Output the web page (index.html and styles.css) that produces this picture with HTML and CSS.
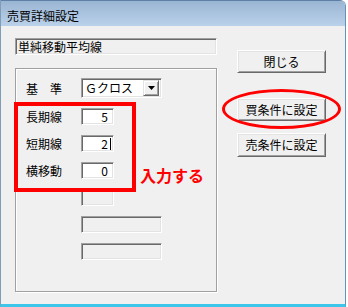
FILE: index.html
```html
<!DOCTYPE html>
<html lang="ja">
<head>
<meta charset="utf-8">
<link rel="stylesheet" href="styles.css">
</head>
<body>
<div class="window">
  <div class="titlebar">売買詳細設定</div>
  <div class="client">
    <div class="leftcol">
      <div class="field readonly wide-full">単純移動平均線</div>
      <div class="group">
        <div class="grid">
          <div class="label">基　準</div>
          <div class="combo">
            <span class="combo-text">Ｇクロス</span>
            <span class="combo-btn"><svg width="7" height="4" viewBox="0 0 7 4"><path d="M0 0h7L3.5 4z" fill="#000"/></svg></span>
          </div>
          <div class="label">長期線</div>
          <div class="field num">5</div>
          <div class="label">短期線</div>
          <div class="field num">2<span class="caret"></span></div>
          <div class="label">横移動</div>
          <div class="field num">0</div>
          <div class="label"></div>
          <div class="field readonly"></div>
          <div class="label"></div>
          <div class="field readonly wide"></div>
          <div class="label"></div>
          <div class="field readonly wide"></div>
        </div>
      </div>
    </div>
    <div class="rightcol">
      <button class="btn">閉じる</button>
      <button class="btn btn-buy">買条件に設定</button>
      <button class="btn">売条件に設定</button>
    </div>
  </div>
  <div class="mark-rect"></div>
  <div class="mark-ellipse"></div>
  <div class="mark-text">入力する</div>
</div>
</body>
</html>
```
FILE: styles.css
```css
html, body {
  margin: 0;
  padding: 0;
  background: #ffffff;
}
body {
  font-family: "Noto Sans CJK JP", "Liberation Sans", sans-serif;
  font-size: 12px;
  color: #000;
}
.window {
  position: relative;
  width: 346px;
  height: 307px;
  box-sizing: border-box;
  background: #f0f0f0;
  border-left: 1px solid #7f9db9;
  border-right: 1px solid #6a8fb8;
  border-bottom: 3px solid #3cc6ea;
  border-top-right-radius: 6px;
  overflow: hidden;
}
.titlebar {
  height: 26px;
  box-sizing: border-box;
  padding: 5px 0 0 6px;
  line-height: 20px;
  font-size: 12px;
  background: linear-gradient(#9ab5d3, #bad1ea);
  border-top: 1px solid #5f80a6;
  color: #000;
}
.client {
  display: flex;
  padding: 12px 0 0 14px;
}
.leftcol {
  width: 202px;
  display: flex;
  flex-direction: column;
  gap: 13px;
}
.rightcol {
  margin-left: 20px;
  padding-top: 12px;
  display: flex;
  flex-direction: column;
  width: 89px;
}
.field {
  box-sizing: border-box;
  height: 17px;
  width: 33px;
  background: #fff;
  border: 1px solid;
  border-color: #a0a0a0 #ffffff #ffffff #a0a0a0;
  box-shadow: inset 1px 1px 0 #696969, inset -1px -1px 0 #e3e3e3;
  line-height: 15px;
  padding: 0 3px 0 2px;
  white-space: nowrap;
  overflow: hidden;
}
.field.readonly {
  background: #f0f0f0;
}
.field.wide-full {
  width: 202px;
}
.field.wide {
  width: 81px;
}
.field.num {
  text-align: right;
  padding-right: 5px;
  position: relative;
}
.caret {
  position: absolute;
  right: 2px;
  top: 2px;
  width: 1px;
  height: 12px;
  background: #000;
}
.field.num:has(.caret) {
  padding-right: 5px;
}
.group {
  box-sizing: border-box;
  height: 224px;
  border: 1px solid #a0a0a0;
  box-shadow: 1px 1px 0 #fff, inset 1px 1px 0 #fff;
  padding: 9px 0 0 10px;
}
.grid {
  display: grid;
  grid-template-columns: 55px auto;
  grid-template-rows: 20px repeat(6, 17px);
  row-gap: 10px;
  align-items: center;
  justify-items: start;
}
.grid .combo {
  margin-bottom: 1px;
}
.label {
  line-height: 17px;
}
.combo {
  box-sizing: border-box;
  width: 81px;
  height: 20px;
  background: #fff;
  border: 1px solid;
  border-color: #a0a0a0 #ffffff #ffffff #a0a0a0;
  box-shadow: inset 1px 1px 0 #696969, inset -1px -1px 0 #e3e3e3;
  display: flex;
  align-items: center;
  padding: 2px 2px 2px 3px;
}
.combo-text {
  flex: 1;
  line-height: 16px;
}
.combo-btn {
  box-sizing: border-box;
  width: 16px;
  height: 16px;
  background: #f0f0f0;
  border: 1px solid;
  border-color: #e3e3e3 #696969 #696969 #e3e3e3;
  box-shadow: inset 1px 1px 0 #fff, inset -1px -1px 0 #a0a0a0;
  display: flex;
  align-items: center;
  justify-content: center;
}
.btn {
  box-sizing: border-box;
  width: 89px;
  height: 23px;
  margin: 0;
  padding: 0;
  font-family: "Noto Sans CJK JP", "Liberation Sans", sans-serif;
  font-size: 12px;
  color: #000;
  background: #f0f0f0;
  border: 1px solid;
  border-color: #ffffff #696969 #696969 #ffffff;
  box-shadow: inset 1px 1px 0 #e3e3e3, inset -1px -1px 0 #a0a0a0;
  line-height: 20px;
}
.btn-buy {
  margin-top: 25px;
}
.btn-buy + .btn {
  margin-top: 12px;
  height: 24px;
}
.mark-rect {
  position: absolute;
  left: 13px;
  top: 102px;
  width: 122px;
  height: 90px;
  box-sizing: border-box;
  border: 4px solid #ff0000;
}
.mark-ellipse {
  position: absolute;
  left: 221px;
  top: 89px;
  width: 119px;
  height: 40px;
  box-sizing: border-box;
  border: 3px solid #ff0000;
  border-radius: 50%;
}
.mark-text {
  position: absolute;
  left: 139px;
  top: 165px;
  font-size: 16px;
  line-height: 20px;
  font-weight: 700;
  color: #ff0000;
}
```
